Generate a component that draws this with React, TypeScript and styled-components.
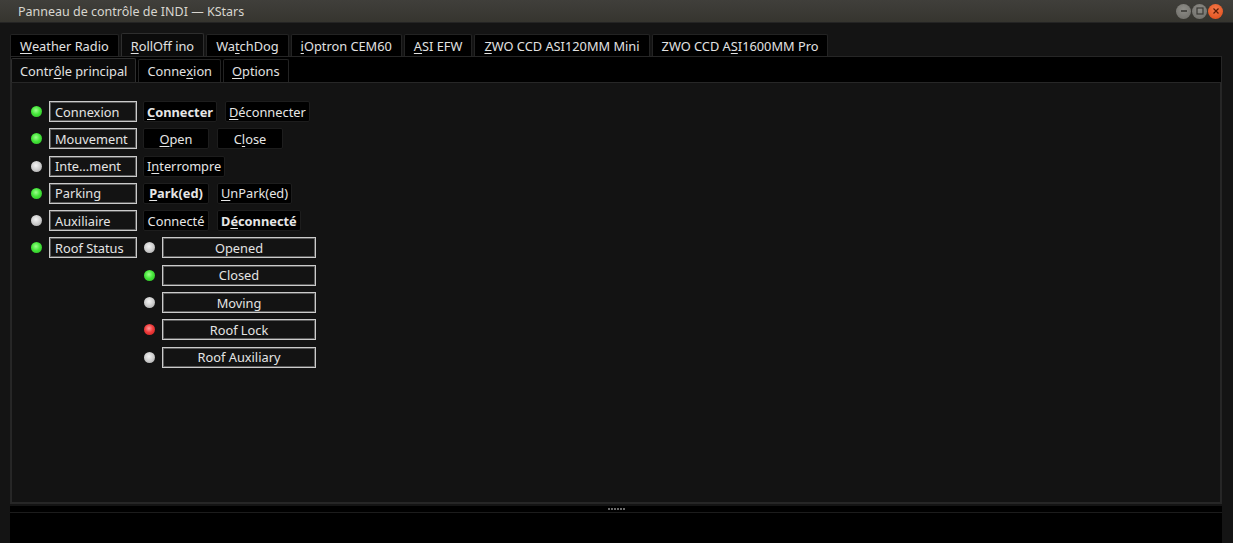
import React from "react";
import styled, { createGlobalStyle } from "styled-components";

const GlobalStyle = createGlobalStyle`
  html, body {
    margin: 0;
    padding: 0;
    background: #141414;
  }
  body {
    font-family: "Noto Sans", "Open Sans", sans-serif;
    font-size: 12.8px;
    color: #dedede;
  }
  u {
    text-decoration-thickness: 1px;
    text-underline-offset: 2px;
  }
`;

const Window = styled.div`
  width: 1233px;
  height: 543px;
  display: flex;
  flex-direction: column;
  background: #141414;
  overflow: hidden;
`;

const TitleBar = styled.div`
  height: 22px;
  flex: none;
  display: flex;
  align-items: center;
  justify-content: space-between;
  padding: 0 10px 0 18px;
  background: linear-gradient(#403f3b, #36352f);
  color: #d8d6cf;
  font-size: 12.5px;
  border-bottom: 1px solid #242424;
`;

const WinButtons = styled.div`
  display: flex;
  gap: 1px;
  align-items: center;
`;

const WinButton = styled.span<{ $close?: boolean }>`
  width: 15px;
  height: 15px;
  border-radius: 50%;
  display: flex;
  align-items: center;
  justify-content: center;
  background: ${(p) =>
    p.$close
      ? "radial-gradient(circle at 50% 35%, #f47a4a, #df4a16)"
      : "radial-gradient(circle at 50% 35%, #8e8d88, #6c6b66)"};
  svg {
    display: block;
  }
`;

const Body = styled.div`
  flex: 1;
  display: flex;
  flex-direction: column;
  padding: 9px 11px 0 10px;
  min-height: 0;
`;

const TabBar = styled.div`
  display: flex;
  align-items: flex-end;
  gap: 2px;
  height: 24px;
  flex: none;
`;

const Tab = styled.div<{ $active?: boolean }>`
  height: ${(p) => (p.$active ? "24px" : "22px")};
  box-sizing: border-box;
  padding: 0 9px;
  display: flex;
  align-items: center;
  background: ${(p) => (p.$active ? "#0b0b0b" : "#000")};
  border: 1px solid ${(p) => (p.$active ? "#2e2e2e" : "#232323")};
  border-bottom: none;
  border-radius: 2px 2px 0 0;
  white-space: nowrap;
  color: #e2e2e2;
  margin-bottom: ${(p) => (p.$active ? "-1px" : "0")};
`;

const TopPane = styled.div`
  flex: 1;
  display: flex;
  flex-direction: column;
  border: 1px solid #262626;
  min-height: 0;
`;

const SubTabBar = styled(TabBar)`
  background: #000;
  height: 25px;
  gap: 2px;
`;

const SubTab = styled(Tab)`
  height: ${(p) => (p.$active ? "25px" : "23px")};
  padding: 0 8px;
`;

const ContentPane = styled.div`
  flex: 1;
  background: #131313;
  border: 1px solid #272727;
  padding: 18px 19px;
  display: flex;
  flex-direction: column;
  gap: 6.3px;
`;

const Row = styled.div`
  display: flex;
  align-items: flex-start;
`;

const LedCell = styled.div`
  width: 18px;
  height: 21px;
  display: flex;
  align-items: center;
  flex: none;
`;

const Led = styled.span<{ $state: "ok" | "idle" | "alert" }>`
  width: 11px;
  height: 11px;
  border-radius: 50%;
  display: block;
  background: ${(p) =>
    p.$state === "ok"
      ? "radial-gradient(circle at 45% 40%, #9dff8c 0%, #45e63a 45%, #27b31f 100%)"
      : p.$state === "alert"
      ? "radial-gradient(circle at 45% 40%, #ff9b9b 0%, #f03c3c 45%, #c01c1c 100%)"
      : "radial-gradient(circle at 45% 40%, #f4f4f4 0%, #cdcdcd 50%, #9c9c9c 100%)"};
`;

const LabelBox = styled.div`
  width: 88px;
  height: 21px;
  box-sizing: border-box;
  border: 1px solid #cbcbcb;
  box-shadow: inset 0 0 0 1px #5a5a5a;
  padding: 0 5px;
  display: flex;
  align-items: center;
  white-space: nowrap;
  color: #e4e4e4;
  flex: none;
`;

const Controls = styled.div`
  display: flex;
  gap: 8px;
  margin-left: 6px;
`;

const ActionButton = styled.div<{ $bold?: boolean }>`
  min-width: 66px;
  height: 21px;
  box-sizing: border-box;
  padding: 0 3px;
  display: flex;
  align-items: center;
  justify-content: center;
  background: #000;
  border: 1px solid #1d1d1d;
  border-radius: 2px;
  font-weight: ${(p) => (p.$bold ? 700 : 400)};
  color: #e6e6e6;
  white-space: nowrap;
`;

const LightList = styled.div`
  display: flex;
  flex-direction: column;
  gap: 6.3px;
  margin-left: 7px;
`;

const LightRow = styled.div`
  display: flex;
  align-items: center;
`;

const LightBox = styled(LabelBox)`
  width: 154px;
  justify-content: center;
`;

const Splitter = styled.div`
  height: 6px;
  flex: none;
  margin-top: 2px;
  background: #000;
  display: flex;
  align-items: center;
  justify-content: center;
  gap: 1px;
  border-bottom: 1px solid #1c1c1c;
`;

const Dot = styled.span`
  width: 2px;
  height: 2px;
  background: #6a6a6a;
`;

const LogArea = styled.div`
  height: 30px;
  flex: none;
  background: #000;
`;

type LedState = "ok" | "idle" | "alert";

const topTabs: { label: React.ReactNode; active?: boolean }[] = [
  { label: <><u>W</u>eather Radio</> },
  { label: <><u>R</u>ollOff ino</>, active: true },
  { label: <>Wa<u>t</u>chDog</> },
  { label: <><u>i</u>Optron CEM60</> },
  { label: <><u>A</u>SI EFW</> },
  { label: <><u>Z</u>WO CCD ASI120MM Mini</> },
  { label: <>ZWO CCD A<u>S</u>I1600MM Pro</> },
];

const subTabs: { label: React.ReactNode; active?: boolean }[] = [
  { label: <>Contr<u>ô</u>le principal</>, active: true },
  { label: <>Conne<u>x</u>ion</> },
  { label: <><u>O</u>ptions</> },
];

const properties: {
  led: LedState;
  label: string;
  buttons: { text: React.ReactNode; bold?: boolean }[];
}[] = [
  {
    led: "ok",
    label: "Connexion",
    buttons: [
      { text: <><u>C</u>onnecter</>, bold: true },
      { text: <><u>D</u>éconnecter</> },
    ],
  },
  {
    led: "ok",
    label: "Mouvement",
    buttons: [{ text: <><u>O</u>pen</> }, { text: <>C<u>l</u>ose</> }],
  },
  {
    led: "idle",
    label: "Inte…ment",
    buttons: [{ text: <>I<u>n</u>terrompre</> }],
  },
  {
    led: "ok",
    label: "Parking",
    buttons: [
      { text: <><u>P</u>ark(ed)</>, bold: true },
      { text: <><u>U</u>nPark(ed)</> },
    ],
  },
  {
    led: "idle",
    label: "Auxiliaire",
    buttons: [
      { text: <>Connecté</> },
      { text: <>D<u>é</u>connecté</>, bold: true },
    ],
  },
];

const roofLights: { led: LedState; label: string }[] = [
  { led: "idle", label: "Opened" },
  { led: "ok", label: "Closed" },
  { led: "idle", label: "Moving" },
  { led: "alert", label: "Roof Lock" },
  { led: "idle", label: "Roof Auxiliary" },
];

export default function App() {
  return (
    <>
      <GlobalStyle />
      <Window>
        <TitleBar>
          <span>Panneau de contrôle de INDI — KStars</span>
          <WinButtons>
            <WinButton>
              <svg width="8" height="8" viewBox="0 0 8 8">
                <line x1="1" y1="4" x2="7" y2="4" stroke="#3a3935" strokeWidth="1.6" />
              </svg>
            </WinButton>
            <WinButton>
              <svg width="8" height="8" viewBox="0 0 8 8">
                <rect x="1" y="1" width="6" height="6" fill="none" stroke="#3a3935" strokeWidth="1.2" />
              </svg>
            </WinButton>
            <WinButton $close>
              <svg width="8" height="8" viewBox="0 0 8 8">
                <path d="M1.5 1.5 L6.5 6.5 M6.5 1.5 L1.5 6.5" stroke="#5a1c06" strokeWidth="1.2" />
              </svg>
            </WinButton>
          </WinButtons>
        </TitleBar>
        <Body>
          <TabBar>
            {topTabs.map((t, i) => (
              <Tab key={i} $active={t.active}>
                {t.label}
              </Tab>
            ))}
          </TabBar>
          <TopPane>
            <SubTabBar>
              {subTabs.map((t, i) => (
                <SubTab key={i} $active={t.active}>
                  {t.label}
                </SubTab>
              ))}
            </SubTabBar>
            <ContentPane>
              {properties.map((p) => (
                <Row key={p.label}>
                  <LedCell>
                    <Led $state={p.led} />
                  </LedCell>
                  <LabelBox>{p.label}</LabelBox>
                  <Controls>
                    {p.buttons.map((b, i) => (
                      <ActionButton key={i} $bold={b.bold}>
                        {b.text}
                      </ActionButton>
                    ))}
                  </Controls>
                </Row>
              ))}
              <Row>
                <LedCell>
                  <Led $state="ok" />
                </LedCell>
                <LabelBox>Roof Status</LabelBox>
                <LightList>
                  {roofLights.map((l) => (
                    <LightRow key={l.label}>
                      <LedCell>
                        <Led $state={l.led} />
                      </LedCell>
                      <LightBox>{l.label}</LightBox>
                    </LightRow>
                  ))}
                </LightList>
              </Row>
            </ContentPane>
          </TopPane>
          <Splitter>
            {Array.from({ length: 6 }).map((_, i) => (
              <Dot key={i} />
            ))}
          </Splitter>
          <LogArea />
        </Body>
      </Window>
    </>
  );
}
